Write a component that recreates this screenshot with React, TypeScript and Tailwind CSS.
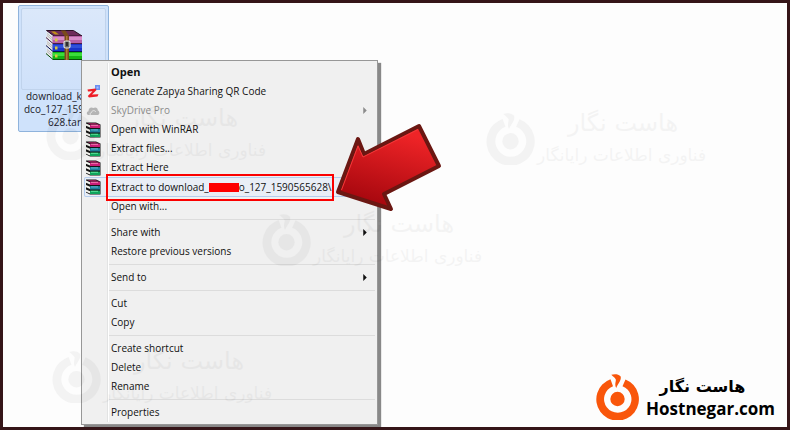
import type { ReactNode } from "react";

function BooksIcon() {
  const books = [
    { y: 2, body: "#c81e78", light: "#ee6aa8" },
    { y: 6.5, body: "#1c7f9c", light: "#58b4cc" },
    { y: 11, body: "#0fa45c", light: "#4cd890" },
  ];
  return (
    <svg viewBox="0 0 16 16" className="size-4" aria-hidden="true">
      <path d="M1 .5h10l4.500 2v13H5L1 13.500z" fill="#141414" />
      <path d="M2.500 1h8l3 1.200H5z" fill="#8d1c52" />
      {books.map((b) => (
        <g key={b.y}>
          <path d={`M5 ${b.y + 0.6}h10v3.400H5z`} fill={b.body} />
          <path d={`M6 ${b.y + 0.8}h7v1.200H6z`} fill={b.light} />
          <path d={`M1 ${b.y - 0.4}l4 1.600v2.200l-4-1.600z`} fill="#f4f4ee" />
        </g>
      ))}
    </svg>
  );
}

function ArchiveIcon() {
  const books = [
    { y: 36, face: "#b860a6", light: "#d78cc8", dark: "#4c1c44" },
    { y: 44, face: "#1a34c8", light: "#3050d8", dark: "#0a1250" },
    { y: 52, face: "#14b414", light: "#3cdc3c", dark: "#064c06" },
  ];
  return (
    <svg viewBox="44 29 38 32" className="h-8 w-[38px]" aria-hidden="true">
      <path d="M45.500 30.500h27l8.500 5.500H53z" fill="#6e2c5a" stroke="#2b1024" />
      <path d="M50 31.500h4l4 3h-4z" fill="#c09018" />
      {books.map((b) => (
        <g key={b.y}>
          <path d={`M45 ${b.y - 5}l7 5.500v6.500l-7-5.500c1-2 1-4 0-6.500z`} fill="#e8e8e8" />
          <path d={`M46 ${b.y - 2.5}l6 5M46 ${b.y - 0.5}l6 5`} stroke="#9a9a9a" strokeWidth=".6" />
          <path d={`M51.500 ${b.y}H81v7.500H51.500z`} fill={b.face} />
          <path d={`M52 ${b.y + 1}h29v3H52z`} fill={b.light} />
          <path d={`M45 ${b.y + 1.5}l7 6.000H81`} fill="none" stroke={b.dark} />
          <path d={`M54 ${b.y + 2.5}h2.500v3H54z`} fill="#d8c840" />
        </g>
      ))}
      <path d="M60 30.500h4.500l3.500 5.500v24h-4.500V36z" fill="#7a4a1c" />
      <path d="M65 36h1.500v24H65z" fill="#b07c38" />
      <rect x="63" y="41" width="6" height="7" rx="1.500" fill="#666" stroke="#e4e4e4" strokeWidth="1.200" />
      <path d="M66 42v4" stroke="#111" strokeWidth="1.300" />
    </svg>
  );
}

function ZapyaIcon() {
  return (
    <svg viewBox="0 0 16 16" className="size-4" aria-hidden="true">
      <rect x="10" y="1" width="5" height="5" fill="#6b8ff0" />
      <path d="M11.500 2.500h2v2h-2z" fill="#a9beff" />
      <path d="M2.500 5.500 10.500 4.500 11.500 6 7 10.600 13.500 10.300 12.500 12.600 4 13.600 2.800 12 7.500 7.200 3 7.600z" fill="#ee1c25" />
    </svg>
  );
}

function CloudIcon() {
  return (
    <svg viewBox="0 0 16 16" className="size-4" aria-hidden="true">
      <path d="M4 12C1.200 12 1.200 8.600 3.500 8.200 3.300 5 6.200 3.500 8.300 5 10.500 3.500 13 5 12.800 7.500 15 8 14.800 12 12.800 12z" fill="#b4b4b4" />
      <path d="M6 12.500C4.500 12 4.800 9.600 6.500 9.500 6.800 7.200 10 7 10.800 9" fill="none" stroke="#ededed" strokeWidth=".8" />
    </svg>
  );
}

function Logo({ className }: { className: string }) {
  return (
    <svg viewBox="0 0 43 46" className={className} fill="currentColor" aria-hidden="true">
      <path d="M14.500 5.200A21.300 21.300 0 1 0 29.500 5.500L26.500 12.200A13.700 13.700 0 1 1 17 12.200z" />
      <path d="M15.300 .8C18-.1 22.500-.2 24.700 2.600 25.400 6.800 22.600 8.800 20.200 14 18.200 10.500 20.200 7.500 19.800 5.400 18.700 3.400 17 2.600 15.300 .8z" />
      <circle cx="21.500" cy="25" r="7.200" />
    </svg>
  );
}

function Watermark({ className }: { className: string }) {
  return (
    <div className={`pointer-events-none absolute flex items-center gap-[2px] text-black opacity-[0.035] ${className}`} aria-hidden="true">
      <Logo className="h-[52px] w-[49px]" />
      <div dir="rtl" className="whitespace-nowrap font-['DejaVu_Sans',sans-serif]">
        <p className="pr-7 text-2xl leading-8">هاست نگار</p>
        <p className="text-[17px] leading-8">فناوری اطلاعات رایانگار</p>
      </div>
    </div>
  );
}

type Item = { label: string; icon?: ReactNode; submenu?: boolean; bold?: boolean; disabled?: boolean; marked?: boolean };

const groups: Item[][] = [
  [
    { label: "Open", bold: true },
    { label: "Generate Zapya Sharing QR Code", icon: <ZapyaIcon /> },
    { label: "SkyDrive Pro", icon: <CloudIcon />, submenu: true, disabled: true },
    { label: "Open with WinRAR", icon: <BooksIcon /> },
    { label: "Extract files...", icon: <BooksIcon /> },
    { label: "Extract Here", icon: <BooksIcon /> },
    { label: "Extract to download_", icon: <BooksIcon />, marked: true },
    { label: "Open with..." },
  ],
  [{ label: "Share with", submenu: true }, { label: "Restore previous versions" }],
  [{ label: "Send to", submenu: true }],
  [{ label: "Cut" }, { label: "Copy" }],
  [{ label: "Create shortcut" }, { label: "Delete" }, { label: "Rename" }],
  [{ label: "Properties" }],
];

function MenuRow({ item }: { item: Item }) {
  const box = item.marked
    ? "h-5 rounded-xs bg-[#e9eef6] shadow-[inset_0_0_0_1px_#b5cdee]"
    : "h-[19px]";
  const tone = item.disabled ? "text-[#8b8b8b]" : "text-[#101010]";
  return (
    <button role="menuitem" disabled={item.disabled} className={`relative flex w-full items-center whitespace-nowrap text-left ${box} ${tone} ${item.bold ? "text-[11px] font-bold" : ""}`}>
      <span className="flex w-[27px] shrink-0 pl-px">{item.icon}</span>
      <span className="flex items-center">
        {item.label}
        {item.marked && (
          <>
            <span className="h-[9px] w-[30px] bg-[#fe0000]" />
            o_127_1590565628\
          </>
        )}
      </span>
      {item.submenu && (
        <svg viewBox="0 0 4 8" className="mr-2 ml-auto h-[7px] w-1" fill="currentColor" aria-hidden="true">
          <path d="M0 0 4 4 0 8z" />
        </svg>
      )}
      {item.marked && <span className="absolute -top-[3px] left-[22px] h-[27px] w-[228px] border-2 border-[#fb0000]" />}
    </button>
  );
}

function ContextMenu() {
  return (
    <div role="menu" className="absolute top-[57px] left-[78px] w-[297px] border border-[#979797] bg-[#f0f0f0] p-[2px] text-[10px] shadow-[3px_3px_1px_#888]">
      <div className="absolute inset-y-[2px] left-[25px] w-[2px] border-r border-l border-r-white border-l-[#e2e3e3]" />
      {groups.map((group, i) => (
        <div key={group[0].label}>
          {i > 0 && (
            <div role="separator" className="ml-6 py-[3px]">
              <div className="h-px bg-[#dcdcdc]" />
            </div>
          )}
          {group.map((item) => (
            <MenuRow key={item.label} item={item} />
          ))}
        </div>
      ))}
    </div>
  );
}

function RedArrow() {
  return (
    <svg viewBox="334 120 110 94" className="absolute top-[117px] left-[331px] h-[94px] w-[110px]" aria-hidden="true">
      <defs>
        <linearGradient id="arrowFill" x1=".7" y1=".1" x2=".4" y2="1">
          <stop offset="0" stopColor="#ef2427" />
          <stop offset="1" stopColor="#a3060d" />
        </linearGradient>
      </defs>
      <path d="M338 192 358 139 364 154 419 126 439 166 384 194 391 209z" fill="url(#arrowFill)" stroke="#6b1712" strokeWidth="4" strokeLinejoin="round" />
      <path d="M341.500 190 358 146 363 157 418 129.500" fill="none" stroke="#f5393a" strokeWidth="1" />
    </svg>
  );
}

export default function App() {
  return (
    <main className="relative h-screen w-full overflow-hidden border-3 border-[#351518] bg-[#fdfdfd] font-['Open_Sans','Noto_Sans',sans-serif]">
      <button className="absolute top-[2px] left-[15px] flex w-[91px] flex-col rounded-xs border border-[#8fb3dc] bg-[#cfe2fb] p-[2px] text-[10px] leading-[13px] text-[#1a1a2a]">
        <span className="flex h-[82px] w-full items-center justify-center rounded-xs border border-[#c0d3ec] bg-linear-to-b from-[#dbe8fa] to-[#cfe1fa] pb-2">
          <ArchiveIcon />
        </span>
        <span className="w-full pl-[5px] text-left">download_k</span>
        <span className="w-full pl-[3px] text-left">dco_127_159</span>
        <span className="w-full pl-[27px] text-left">628.tar</span>
      </button>

      <ContextMenu />

      <Watermark className="top-[99px] left-[43px]" />
      <Watermark className="top-[104px] left-[483px]" />
      <Watermark className="top-[205px] left-[259px]" />
      <Watermark className="top-[342px] left-[49px]" />

      <RedArrow />

      <div className="absolute right-3 bottom-[7px] flex items-center gap-[7px] text-black">
        <Logo className="h-[46px] w-[43px] text-[#f9560b]" />
        <div className="text-center">
          <p dir="rtl" className="pr-4 font-['DejaVu_Sans',sans-serif] text-base font-bold leading-6">هاست نگار</p>
          <p className="text-[17px] font-bold leading-5">Hostnegar.com</p>
        </div>
      </div>
    </main>
  );
}
